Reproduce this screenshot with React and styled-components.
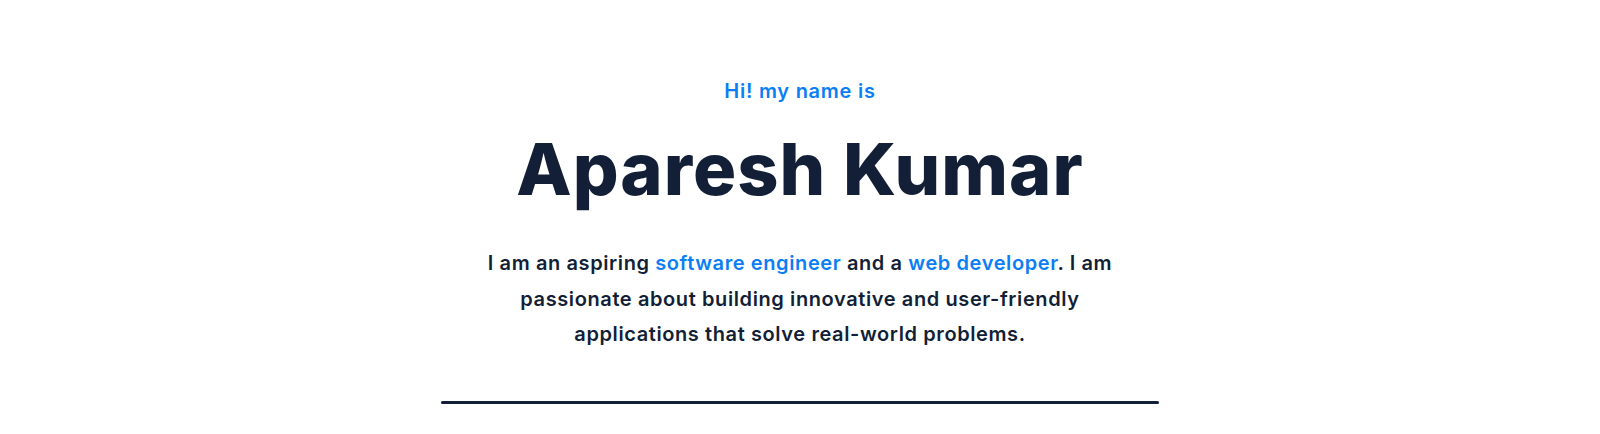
import React from "react";
import styled, { createGlobalStyle } from "styled-components";

const GlobalStyle = createGlobalStyle`
  html, body {
    margin: 0;
    padding: 0;
    background: #ffffff;
  }
  body {
    font-family: Inter, "Noto Sans", sans-serif;
    -webkit-font-smoothing: antialiased;
  }
`;

const Hero = styled.section`
  display: flex;
  flex-direction: column;
  align-items: center;
  padding-top: 77px;
  width: 100%;
`;

const Greeting = styled.p`
  margin: 0;
  font-size: 20px;
  line-height: 28px;
  font-weight: 600;
  color: #0b7ef5;
  letter-spacing: 0.74px;
`;

const Name = styled.h1`
  margin: 21px 0 0;
  font-size: 72px;
  line-height: 86px;
  font-weight: 800;
  color: #121f36;
  letter-spacing: 1px;
`;

const Intro = styled.p`
  margin: 34px 0 0;
  max-width: 650px;
  text-align: center;
  font-size: 20px;
  line-height: 35.5px;
  font-weight: 600;
  color: #121f36;
  letter-spacing: 0.6px;
`;

const Accent = styled.span`
  color: #0b7ef5;
`;

const Divider = styled.hr`
  margin: 48px 0 0;
  width: 718px;
  height: 3px;
  border: none;
  border-radius: 2px;
  background: #121f36;
`;

export default function App() {
  return (
    <>
      <GlobalStyle />
      <Hero>
        <Greeting>Hi! my name is</Greeting>
        <Name>Aparesh Kumar</Name>
        <Intro>
          I am an aspiring <Accent>software engineer</Accent> and a{" "}
          <Accent>web developer</Accent>. I am passionate about building
          innovative and user-friendly applications that solve real-world
          problems.
        </Intro>
        <Divider />
      </Hero>
    </>
  );
}
